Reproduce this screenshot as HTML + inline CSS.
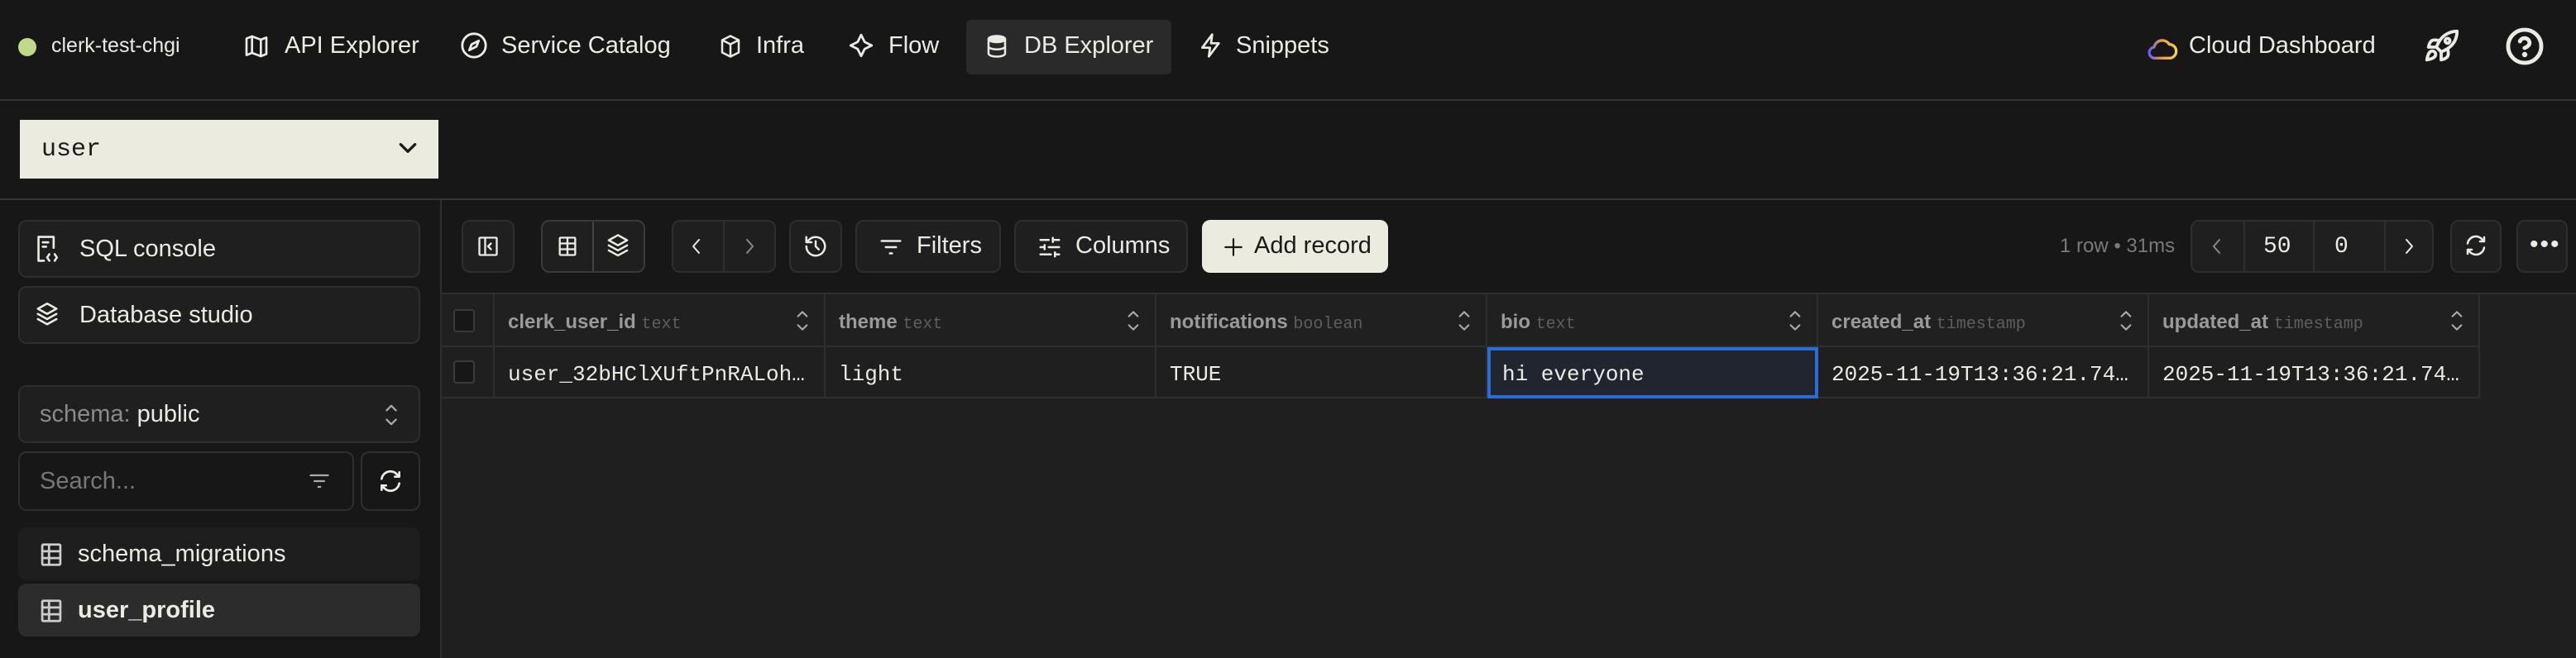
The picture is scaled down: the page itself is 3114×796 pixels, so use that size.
<!DOCTYPE html>
<html><head><meta charset="utf-8"><style>
*{box-sizing:border-box;margin:0;padding:0}
body{width:3114px;height:796px;background:#171717;font-family:"Liberation Sans",sans-serif;color:#ecebe3;position:relative;overflow:hidden}
.a{position:absolute}
.t{font-size:29px;line-height:1;white-space:nowrap}
.btn{position:absolute;border:2px solid #2e2e2e;border-radius:10px;background:#1f1f1f}
svg{position:absolute;fill:none;stroke:#ecebe3;stroke-width:2;stroke-linecap:round;stroke-linejoin:round}
.mono{font-family:"Liberation Mono",monospace}
.hd{position:absolute;top:356px;height:64px;border-right:2px solid #2e2e2e;border-bottom:2px solid #2e2e2e;background:#202020}
.cl{position:absolute;top:420px;height:62px;border-right:2px solid #2e2e2e;border-bottom:2px solid #2e2e2e;background:#1f1f1f}
.hn{position:absolute;left:16px;top:20px;font-size:24px;font-weight:bold;color:#9a9a9a;white-space:nowrap}
.hn span{font-family:"Liberation Mono",monospace;font-weight:normal;font-size:20px;color:#5e5e5e}
.cv{position:absolute;left:16px;top:18px;font-family:"Liberation Mono",monospace;font-size:26px;color:#ecebe3;white-space:nowrap}
.sort{right:18px;top:18px}
</style></head><body>
<!-- nav -->
<div class="a" style="left:22px;top:46px;width:22px;height:22px;border-radius:50%;background:#c2d98a"></div>
<div class="a t" style="left:62px;top:43px;font-size:25px">clerk-test-chgi</div>

<svg style="left:294px;top:40px" width="32" height="32" viewBox="0 0 24 24"><path d="M3 5l5-2 8 3 5-2v15l-5 2-8-3-5 2z M8 3v15 M16 6v15"/></svg>
<div class="a t" style="left:344px;top:41px">API Explorer</div>
<svg style="left:556px;top:38px" width="34" height="34" viewBox="0 0 24 24"><circle cx="12" cy="12" r="10"/><path d="M16 8l-6 3-2 5 6-3z"/></svg>
<div class="a t" style="left:606px;top:41px">Service Catalog</div>
<svg style="left:868px;top:40px" width="30" height="32" viewBox="0 0 24 24"><path d="M12 2l8 4v12l-8 4-8-4V6z M4 6l8 4 8-4 M12 10v12"/></svg>
<div class="a t" style="left:914px;top:41px">Infra</div>
<svg style="left:1024px;top:38px" width="34" height="34" viewBox="0 0 24 24"><path d="M12 3l3 6 6 3-6 3-3 6-3-6-6-3 6-3z"/></svg>
<div class="a t" style="left:1074px;top:41px">Flow</div>
<div class="a" style="left:1168px;top:24px;width:248px;height:66px;border-radius:6px;background:#2a2a2a"></div>
<svg style="left:1190px;top:40px" width="30" height="32" viewBox="0 0 24 24"><ellipse cx="12" cy="5" rx="8" ry="3" fill="#ecebe3"/><path d="M4 5v14c0 1.7 3.6 3 8 3s8-1.3 8-3V5 M4 12c0 1.7 3.6 3 8 3s8-1.3 8-3"/></svg>
<div class="a t" style="left:1238px;top:41px">DB Explorer</div>
<svg style="left:1448px;top:38px" width="32" height="34" viewBox="0 0 24 24"><path d="M13 2L4 14h7l-1 8 9-12h-7z"/></svg>
<div class="a t" style="left:1494px;top:41px">Snippets</div>

<svg style="left:2594px;top:40px" width="40" height="34" viewBox="0 0 24 20"><defs><linearGradient id="g" x1="0" x2="1"><stop offset="0" stop-color="#6b5cf0"/><stop offset=".5" stop-color="#f0a040"/><stop offset="1" stop-color="#f5d04a"/></linearGradient></defs><path stroke="url(#g)" d="M7 18h10a5 5 0 0 0 0-10 6 6 0 0 0-11 2 4 4 0 0 0 1 8z"/></svg>
<div class="a t" style="left:2646px;top:41px">Cloud Dashboard</div>
<svg style="left:2928px;top:34px" width="46" height="46" viewBox="0 0 24 24"><path d="M5 15c-1.5 1.3-2 5-2 5s3.7-.5 5-2c.7-.8.7-2.1-.1-2.9-.8-.8-2.1-.8-2.9-.1z M12 15l-3-3a22 22 0 0 1 2-4A13 13 0 0 1 22 2c0 2.7-.8 7.5-6 11a22 22 0 0 1-4 2z M9 12H4s.6-3 2-4c1.6-1.1 5 0 5 0 M12 15v5s3-.6 4-2c1.1-1.6 0-5 0-5"/><circle cx="16" cy="8" r="1.5"/></svg>
<svg style="left:3028px;top:32px" width="48" height="48" viewBox="0 0 24 24" style="stroke-width:2.4"><circle cx="12" cy="12" r="10" stroke-width="2.4"/><path d="M9.1 9a3 3 0 0 1 5.8 1c0 2-3 3-3 3" stroke-width="2.4"/><circle cx="12" cy="17" r=".6" fill="#ecebe3" stroke-width="2"/></svg>

<div class="a" style="left:0;top:120px;width:3114px;height:2px;background:#353535"></div>
<!-- select -->
<div class="a" style="left:24px;top:145px;width:506px;height:71px;background:#ecebdf"></div>
<div class="a mono" style="left:50px;top:164px;font-size:30px;color:#1a1a1a">user</div>
<svg style="left:480px;top:168px;stroke:#1a1a1a;stroke-width:3" width="26" height="22" viewBox="0 0 24 20"><path d="M4 6l8 8 8-8"/></svg>

<div class="a" style="left:0;top:240px;width:3114px;height:2px;background:#353535"></div>
<div class="a" style="left:532px;top:242px;width:2px;height:554px;background:#2e2e2e"></div>
<!-- sidebar -->
<div class="btn" style="left:22px;top:266px;width:486px;height:70px"></div>
<svg style="left:42px;top:284px" width="30" height="34" viewBox="0 0 22 26"><path d="M8 24H3V2h14v10 M7 7h5 M7 11h3 M13 18l-2 3 2 3 M18 18l2 3-2 3"/></svg>
<div class="a t" style="left:96px;top:287px">SQL console</div>
<div class="btn" style="left:22px;top:346px;width:486px;height:70px"></div>
<svg style="left:42px;top:364px" width="30" height="34" viewBox="0 0 24 26"><path d="M12 2l9 5-9 5-9-5z M3 12l9 5 9-5 M3 17l9 5 9-5"/></svg>
<div class="a t" style="left:96px;top:367px">Database studio</div>

<div class="btn" style="left:22px;top:466px;width:486px;height:70px"></div>
<div class="a t" style="left:48px;top:487px"><span style="color:#8a8a8a">schema:</span> public</div>
<svg style="left:464px;top:488px;stroke:#aaa;stroke-width:1.6" width="18" height="28" viewBox="0 0 12 20"><path d="M2 6l4-4 4 4 M2 14l4 4 4-4"/></svg>

<div class="btn" style="left:22px;top:546px;width:406px;height:72px;background:#171717"></div>
<div class="a t" style="left:48px;top:568px;color:#777">Search...</div>
<svg style="left:372px;top:570px;stroke:#aaa" width="28" height="24" viewBox="0 0 24 20"><path d="M3 4h18 M7 10h10 M11 16h2"/></svg>
<div class="btn" style="left:436px;top:546px;width:72px;height:72px;background:#171717"></div>
<svg style="left:456px;top:566px" width="32" height="32" viewBox="0 0 24 24"><path d="M4 10a8 8 0 0 1 14-4l2 2 M20 4v4h-4 M20 14a8 8 0 0 1-14 4l-2-2 M4 20v-4h4"/></svg>

<div class="a" style="left:22px;top:638px;width:486px;height:64px;border-radius:10px;background:#1e1e1e"></div>
<svg style="left:48px;top:656px;stroke:#ccc" width="28" height="30" viewBox="0 0 20 22"><rect x="2" y="2" width="16" height="18" rx="1"/><path d="M2 8h16 M2 14h16 M8 2v18"/></svg>
<div class="a t" style="left:94px;top:656px">schema_migrations</div>
<div class="a" style="left:22px;top:706px;width:486px;height:64px;border-radius:10px;background:#2c2c2c"></div>
<svg style="left:48px;top:724px;stroke:#ccc" width="28" height="30" viewBox="0 0 20 22"><rect x="2" y="2" width="16" height="18" rx="1"/><path d="M2 8h16 M2 14h16 M8 2v18"/></svg>
<div class="a t" style="left:94px;top:724px;font-weight:bold">user_profile</div>

<!-- main bg -->
<div class="a" style="left:534px;top:354px;width:2580px;height:442px;background:#1f1f1f"></div>
<div class="a" style="left:534px;top:354px;width:2580px;height:2px;background:#2e2e2e"></div>

<!-- toolbar -->
<div class="btn" style="left:558px;top:266px;width:64px;height:64px"></div>
<svg style="left:576px;top:284px" width="28" height="28" viewBox="0 0 24 24"><rect x="3" y="3" width="18" height="18" rx="1"/><path d="M9 3v18 M15 9l-3 3 3 3"/></svg>
<div class="btn" style="left:654px;top:266px;width:126px;height:64px;border-color:#3a3a3a"></div>
<div class="a" style="left:716px;top:268px;width:2px;height:60px;background:#444"></div>
<svg style="left:672px;top:284px" width="28" height="28" viewBox="0 0 24 24"><rect x="4" y="3" width="16" height="18" rx="1"/><path d="M4 9h16 M4 15h16 M12 3v18"/></svg>
<svg style="left:732px;top:282px" width="30" height="32" viewBox="0 0 24 26"><path d="M12 2l9 5-9 5-9-5z M3 12l9 5 9-5 M3 17l9 5 9-5"/></svg>
<div class="btn" style="left:812px;top:266px;width:126px;height:64px"></div>
<div class="a" style="left:874px;top:268px;width:2px;height:60px;background:#2e2e2e"></div>
<svg style="left:830px;top:286px" width="24" height="24" viewBox="0 0 24 24"><path d="M15 4l-7 8 7 8"/></svg>
<svg style="left:894px;top:286px;stroke:#888" width="24" height="24" viewBox="0 0 24 24"><path d="M9 4l7 8-7 8"/></svg>
<div class="btn" style="left:954px;top:266px;width:64px;height:64px"></div>
<svg style="left:971px;top:283px" width="30" height="30" viewBox="0 0 24 24"><path d="M3 12a9 9 0 1 0 3-6.7L3 8 M3 3v5h5 M12 7v5l3 3"/></svg>
<div class="btn" style="left:1034px;top:266px;width:176px;height:64px"></div>
<svg style="left:1062px;top:286px" width="30" height="26" viewBox="0 0 24 20"><path d="M3 4h18 M7 10h10 M11 16h2"/></svg>
<div class="a t" style="left:1108px;top:283px">Filters</div>
<div class="btn" style="left:1226px;top:266px;width:210px;height:64px"></div>
<svg style="left:1254px;top:284px" width="30" height="30" viewBox="0 0 24 24"><path d="M3 5h8 M15 5h6 M15 3v4 M3 12h4 M11 12h10 M7 10v4 M3 19h10 M17 19h4 M17 17v4"/></svg>
<div class="a t" style="left:1300px;top:283px">Columns</div>
<div class="a" style="left:1453px;top:266px;width:225px;height:64px;border-radius:10px;background:#ecebdf"></div>
<svg style="left:1478px;top:286px;stroke:#1a1a1a" width="26" height="26" viewBox="0 0 24 24"><path d="M12 3v18 M3 12h18"/></svg>
<div class="a t" style="left:1516px;top:283px;color:#1a1a1a">Add record</div>

<div class="a t" style="left:2490px;top:286px;font-size:24px;color:#7a7a7a">1 row • 31ms</div>
<div class="btn" style="left:2648px;top:266px;width:294px;height:64px"></div>
<div class="a" style="left:2712px;top:268px;width:2px;height:60px;background:#2e2e2e"></div>
<div class="a" style="left:2796px;top:268px;width:2px;height:60px;background:#2e2e2e"></div>
<div class="a" style="left:2882px;top:268px;width:2px;height:60px;background:#2e2e2e"></div>
<svg style="left:2668px;top:286px;stroke:#888" width="24" height="24" viewBox="0 0 24 24"><path d="M15 4l-7 8 7 8"/></svg>
<div class="a mono" style="left:2736px;top:283px;font-size:28px">50</div>
<div class="a mono" style="left:2822px;top:283px;font-size:28px">0</div>
<svg style="left:2900px;top:286px" width="24" height="24" viewBox="0 0 24 24"><path d="M9 4l7 8-7 8"/></svg>
<div class="btn" style="left:2962px;top:266px;width:62px;height:64px"></div>
<svg style="left:2978px;top:282px" width="30" height="30" viewBox="0 0 24 24"><path d="M4 10a8 8 0 0 1 14-4l2 2 M20 4v4h-4 M20 14a8 8 0 0 1-14 4l-2-2 M4 20v-4h4"/></svg>
<div class="btn" style="left:3042px;top:266px;width:62px;height:64px"></div>
<div class="a" style="left:3058px;top:296px;font-size:30px;line-height:0;letter-spacing:2px">•••</div>

<!-- table header -->
<div class="hd" style="left:534px;width:64px"><div class="a" style="left:14px;top:18px;width:26px;height:28px;border:2px solid #3a3a3a;border-radius:4px;background:#171717"></div></div>
<div class="hd" style="left:598px;width:400px"><div class="hn">clerk_user_id <span>text</span></div><svg class="sort" style="stroke:#aaa;stroke-width:1.6" width="16" height="28" viewBox="0 0 12 20"><path d="M2 6l4-4 4 4 M2 14l4 4 4-4"/></svg></div>
<div class="hd" style="left:998px;width:400px"><div class="hn">theme <span>text</span></div><svg class="sort" style="stroke:#aaa;stroke-width:1.6" width="16" height="28" viewBox="0 0 12 20"><path d="M2 6l4-4 4 4 M2 14l4 4 4-4"/></svg></div>
<div class="hd" style="left:1398px;width:400px"><div class="hn">notifications <span>boolean</span></div><svg class="sort" style="stroke:#aaa;stroke-width:1.6" width="16" height="28" viewBox="0 0 12 20"><path d="M2 6l4-4 4 4 M2 14l4 4 4-4"/></svg></div>
<div class="hd" style="left:1798px;width:400px"><div class="hn">bio <span>text</span></div><svg class="sort" style="stroke:#aaa;stroke-width:1.6" width="16" height="28" viewBox="0 0 12 20"><path d="M2 6l4-4 4 4 M2 14l4 4 4-4"/></svg></div>
<div class="hd" style="left:2198px;width:400px"><div class="hn">created_at <span>timestamp</span></div><svg class="sort" style="stroke:#aaa;stroke-width:1.6" width="16" height="28" viewBox="0 0 12 20"><path d="M2 6l4-4 4 4 M2 14l4 4 4-4"/></svg></div>
<div class="hd" style="left:2598px;width:400px"><div class="hn">updated_at <span>timestamp</span></div><svg class="sort" style="stroke:#aaa;stroke-width:1.6" width="16" height="28" viewBox="0 0 12 20"><path d="M2 6l4-4 4 4 M2 14l4 4 4-4"/></svg></div>
<!-- row -->
<div class="cl" style="left:534px;width:64px"><div class="a" style="left:14px;top:16px;width:26px;height:28px;border:2px solid #3a3a3a;border-radius:4px;background:#171717"></div></div>
<div class="cl" style="left:598px;width:400px"><div class="cv">user_32bHClXUftPnRALoh…</div></div>
<div class="cl" style="left:998px;width:400px"><div class="cv">light</div></div>
<div class="cl" style="left:1398px;width:400px"><div class="cv">TRUE</div></div>
<div class="cl" style="left:1798px;width:400px;border:4px solid #2d6bd6;background:#202530"><div class="cv" style="left:14px;top:14px">hi everyone</div></div>
<div class="cl" style="left:2198px;width:400px"><div class="cv">2025-11-19T13:36:21.74…</div></div>
<div class="cl" style="left:2598px;width:400px"><div class="cv">2025-11-19T13:36:21.74…</div></div>
</body></html>
